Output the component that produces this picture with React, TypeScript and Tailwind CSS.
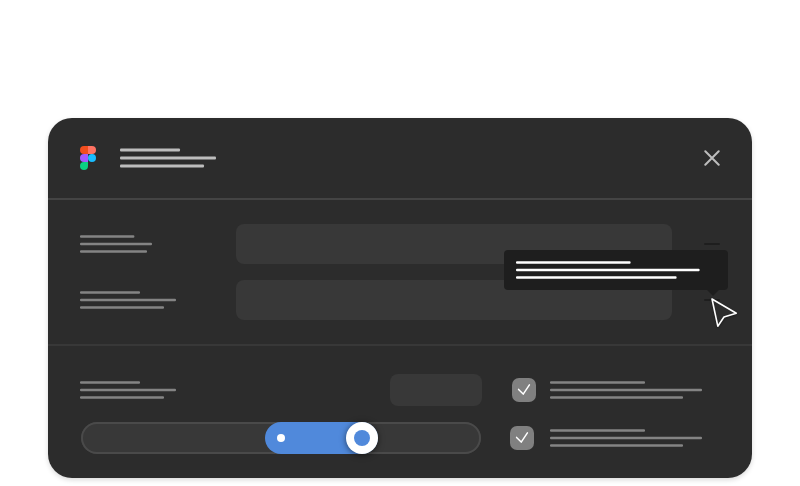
type LinesProps = { widths: number[]; pitch?: number; thickness?: number; className?: string };

/* Three-line block of placeholder copy, vertically centred in 24px. */
function Lines({ widths, pitch = 7.5, thickness = 2.5, className = "text-[#848484]" }: LinesProps) {
  return (
    <svg width={Math.ceil(Math.max(...widths))} height="24" className={`block shrink-0 ${className}`} fill="currentColor">
      {widths.map((w, i) => (
        <rect key={i} x="0" y={12 + (i - 1) * pitch - thickness / 2} width={w} height={thickness} rx="1" />
      ))}
    </svg>
  );
}

function Logo() {
  return (
    <svg width="16" height="24" viewBox="0 0 16 24" className="block shrink-0">
      <path d="M4 0h4v8H4a4 4 0 0 1 0-8z" fill="#f24e1e" />
      <path d="M8 0h4a4 4 0 0 1 0 8H8z" fill="#ff7262" />
      <path d="M4 8h4v8H4a4 4 0 0 1 0-8z" fill="#a259ff" />
      <circle cx="12" cy="12" r="4" fill="#1abcfe" />
      <path d="M4 16h4v4a4 4 0 1 1-4-4z" fill="#0acf83" />
    </svg>
  );
}

function Field({ widths }: { widths: number[] }) {
  return (
    <div className="flex h-10 items-center">
      <div className="w-[156px]">
        <Lines widths={widths} />
      </div>
      <div className="h-10 w-[436px] rounded-lg bg-[#383838]" />
      <div className="ml-8 h-0.5 w-4 rounded-full bg-[#1e1e1e]" />
    </div>
  );
}

function Check({ className }: { className: string }) {
  return (
    <div className={`flex h-6 items-center ${className}`}>
      <div className="size-6 rounded-[7px] bg-[#808080]">
        <svg width="24" height="24" fill="none" stroke="#fff" strokeWidth="1.5" strokeLinecap="round" strokeLinejoin="round">
          <path d="M6.6 11.4l4.6 4.7 6.2-9.3" />
        </svg>
      </div>
    </div>
  );
}

export default function App() {
  return (
    <div className="h-[486px] w-[800px] overflow-hidden bg-white px-12 pt-[118px]">
      <div className="relative h-[360px] w-[704px] rounded-3xl bg-[#2c2c2c] shadow-[0_2px_5px_rgba(0,0,0,0.15)]">
        <header className="flex h-[82px] items-center border-b-2 border-[#444444] px-8">
          <Logo />
          <div className="ml-6">
            <Lines widths={[60, 96, 84]} pitch={8} thickness={3} className="text-[#bdbdbd]" />
          </div>
          <svg width="16" height="16" className="ml-auto block" stroke="#bdbdbd" strokeWidth="2" strokeLinecap="round">
            <path d="M1.3 1.3l13.4 13.4M14.7 1.3L1.3 14.7" />
          </svg>
        </header>

        <section className="flex h-[146px] flex-col gap-4 border-b-2 border-[#383838] px-8 pt-6">
          <Field widths={[54.4, 72, 67]} />
          <Field widths={[60, 96, 84]} />
        </section>

        <section className="flex pl-8 pt-7">
          <div className="w-[402px]">
            <div className="flex h-8 items-center justify-between">
              <Lines widths={[60, 96, 84]} />
              <div className="h-8 w-[92px] rounded-lg bg-[#383838]" />
            </div>
            <div className="ml-px mt-4 h-8 w-[400px] rounded-full bg-[#383838] shadow-[inset_0_0_0_2px_#4a4a4a]">
              <div className="ml-[184px] flex h-8 w-[113px] items-center justify-between rounded-full bg-[#5089db] pl-3">
                <div className="size-2 rounded-full bg-white" />
                <div className="flex size-8 items-center justify-center rounded-full bg-white shadow-[0_1px_6px_rgba(0,0,0,0.55)]">
                  <div className="size-4 rounded-full bg-[#5089db]" />
                </div>
              </div>
            </div>
          </div>
          <div className="ml-7 flex flex-col gap-6 pt-1">
            <div className="flex">
              <Check className="ml-0.5 w-[38px]" />
              <Lines widths={[95, 152, 133]} />
            </div>
            <div className="flex">
              <Check className="w-10" />
              <Lines widths={[95, 152, 133]} />
            </div>
          </div>
        </section>

        {/* Hover tooltip with its pointer, over the form rows */}
        <div className="absolute left-[456px] top-[132px] flex h-10 w-56 items-center rounded bg-[#1e1e1e] pl-3">
          <Lines widths={[114.6, 183.6, 160.6]} className="text-white" />
          <svg width="12" height="6" className="absolute left-[203px] top-full" fill="#1e1e1e">
            <path d="M0 0h12L6 6z" />
          </svg>
        </div>
        <svg
          width="32"
          height="34"
          viewBox="0 0 32 34"
          className="absolute left-[660px] top-[178px] drop-shadow-[0_1px_1px_rgba(0,0,0,0.35)]"
          fill="#2c2c2c"
          stroke="#fff"
          strokeWidth="1.6"
          strokeLinejoin="round"
        >
          <path d="M4 3l24.3 14.2L16 21l-6.2 9.2z" />
        </svg>
      </div>
    </div>
  );
}
